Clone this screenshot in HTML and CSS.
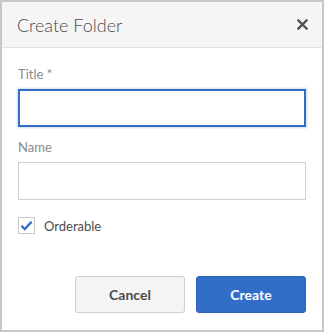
FILE: index.html
```html
<!DOCTYPE html>
<html lang="en">
<head>
    <meta charset="UTF-8">
    <title>Create Folder</title>
    <link rel="stylesheet" href="styles.css">
</head>
<body>
    <div class="dialog">
        <div class="dialog-header">
            <h1>Create Folder</h1>
            <button class="close-btn">
                <svg width="11" height="11" viewBox="0 0 11 11"><path d="M1.5 1.5L9.5 9.5M9.5 1.5L1.5 9.5" stroke="#505050" stroke-width="2.4" stroke-linecap="square"/></svg>
            </button>
        </div>

        <div class="dialog-body">
            <label class="field-label">Title *</label>
            <input type="text" class="field-input focused">

            <label class="field-label">Name</label>
            <input type="text" class="field-input">

            <div class="checkbox-row">
                <span class="checkbox">
                    <svg width="15" height="15" viewBox="0 0 15 15"><path d="M2.5 7.8L5.8 11L12.6 3.8" fill="none" stroke="#326ec8" stroke-width="2.4"/></svg>
                </span>
                <span class="checkbox-label">Orderable</span>
            </div>
        </div>

        <div class="dialog-footer">
            <button class="btn btn-secondary">Cancel</button>
            <button class="btn btn-primary">Create</button>
        </div>
    </div>
</body>
</html>
```

FILE: styles.css
```css
* {
    margin: 0;
    padding: 0;
    box-sizing: border-box;
}

body {
    font-family: 'Lato', sans-serif;
    background: white;
}

.dialog {
    width: 324px;
    height: 332px;
    border: 2px solid #c8c8c8;
    background: white;
    display: flex;
    flex-direction: column;
}

.dialog-header {
    height: 46px;
    background: #f5f5f5;
    border-bottom: 1px solid #e2e2e2;
    display: flex;
    align-items: center;
    justify-content: space-between;
    padding: 0 14px 0 15px;
}

.dialog-header h1 {
    font-size: 18px;
    font-weight: 300;
    color: #4b4b4b;
}

.close-btn {
    background: none;
    border: none;
    width: 11px;
    height: 11px;
    display: flex;
}

.dialog-body {
    padding: 18px 16px 0;
    display: flex;
    flex-direction: column;
}

.field-label {
    font-size: 13px;
    color: #8a8a8a;
    line-height: 16px;
    margin-bottom: 7px;
}

.field-input {
    height: 38px;
    border: 1px solid #d0d0d0;
    border-radius: 0;
    outline: none;
    margin-bottom: 12px;
    font-family: inherit;
}

.field-input.focused {
    border: 2px solid #326ec8;
    box-shadow: 0 0 2px 1px rgba(50, 110, 200, 0.25);
}

.checkbox-row {
    display: flex;
    align-items: center;
    gap: 9px;
    margin-top: 5px;
}

.checkbox {
    width: 17px;
    height: 17px;
    border: 1px solid #c8c8c8;
    display: flex;
    align-items: center;
    justify-content: center;
}

.checkbox-label {
    font-size: 13px;
    color: #4b4b4b;
}

.dialog-footer {
    margin-top: auto;
    padding: 0 16px 17px;
    display: flex;
    justify-content: flex-end;
    gap: 11px;
}

.btn {
    width: 110px;
    height: 37px;
    border-radius: 3px;
    font-family: inherit;
    font-size: 14px;
    font-weight: bold;
}

.btn-secondary {
    background: #f4f4f4;
    border: 1px solid #d0d0d0;
    color: #4b4b4b;
}

.btn-primary {
    background: #326ec8;
    border: 1px solid #2d64b8;
    color: white;
}
```
